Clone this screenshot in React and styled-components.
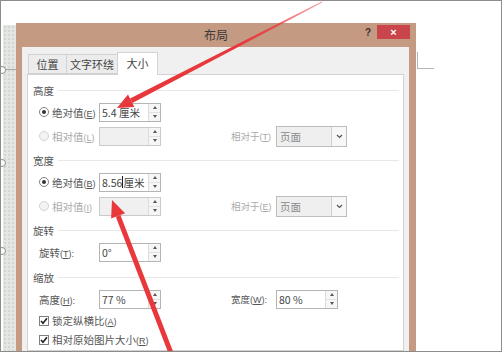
import React from "react";
import styled, { createGlobalStyle } from "styled-components";

const GlobalStyle = createGlobalStyle`
  html, body {
    margin: 0;
    padding: 0;
    background: #ffffff;
  }
  * {
    box-sizing: border-box;
  }
`;

const FONT = `"Noto Sans CJK SC", "Liberation Sans", sans-serif`;
const BROWN = "#c59a82";
const TEXT = "#555555";

const Frame = styled.div`
  position: relative;
  display: flex;
  width: 502px;
  height: 352px;
  border: 1px solid #8c8c8c;
  overflow: hidden;
  background: #fff;
  font-family: ${FONT};
`;

const DocStrip = styled.div`
  position: relative;
  width: 15px;
  flex: 0 0 15px;
  padding-top: 24px;
`;

const Picture = styled.div`
  height: 100%;
  margin-left: 2px;
  background-color: #e3e6e3;
  background-image: radial-gradient(#d2d7d3 1px, transparent 1.2px);
  background-size: 4px 4px;
`;

const MarginLine = styled.div`
  position: absolute;
  left: 0;
  right: 0;
  top: 68px;
  height: 1px;
  background: #a8a8a8;
`;

const Handle = styled.div`
  position: absolute;
  left: -3px;
  top: ${p => p.$top}px;
  width: 8px;
  height: 8px;
  border-radius: 50%;
  border: 1px solid #8c8c8c;
  background: #fff;
`;

const Dialog = styled.div`
  display: flex;
  flex-direction: column;
  width: 400px;
  flex: 0 0 400px;
  margin-top: 22px;
`;

const TitleBar = styled.div`
  display: grid;
  grid-template-columns: 1fr auto 1fr;
  align-items: start;
  height: 24px;
  background: ${BROWN};
`;

const Title = styled.div`
  grid-column: 2;
  line-height: 24px;
  font-size: 12px;
  color: #3a3a3a;
`;

const Controls = styled.div`
  grid-column: 3;
  justify-self: end;
  display: flex;
  align-items: center;
  gap: 6px;
  padding: 2px 6px 0 0;
`;

const Help = styled.span`
  font-family: "Liberation Sans", sans-serif;
  font-weight: bold;
  font-size: 10px;
  color: #3c3128;
`;

const Close = styled.div`
  display: flex;
  align-items: center;
  justify-content: center;
  width: 33px;
  height: 14px;
  background: #c9444b;
  color: #fff;
  font-family: "Liberation Sans", sans-serif;
  font-size: 11px;
  font-weight: bold;
`;

const Body = styled.div`
  flex: 1;
  display: flex;
  flex-direction: column;
  padding: 5px 5px 0 5px;
  background: #f0f0f0;
  border-left: 6px solid ${BROWN};
  border-right: 7px solid ${BROWN};
`;

const Tabs = styled.div`
  display: flex;
  align-items: flex-end;
  height: 22px;
  padding-left: 1px;
  position: relative;
  z-index: 1;
`;

const Tab = styled.div`
  width: ${p => p.$w}px;
  height: ${p => (p.$active ? 23 : 20)}px;
  margin-bottom: ${p => (p.$active ? -1 : 0)}px;
  display: flex;
  align-items: center;
  justify-content: center;
  padding-bottom: ${p => (p.$active ? 2 : 0)}px;
  font-size: 11px;
  color: #444;
  background: ${p => (p.$active ? "#ffffff" : "#ececec")};
  border: 1px solid #d2d2d2;
  border-bottom: ${p => (p.$active ? "none" : "1px solid #d2d2d2")};
  & + & {
    margin-left: -1px;
  }
`;

const Panel = styled.div`
  flex: 1;
  background: #fff;
  border: 1px solid #d2d2d2;
  padding-top: 5px;
`;

const Header = styled.div`
  display: flex;
  align-items: center;
  gap: 4px;
  height: 20px;
  margin-top: ${p => p.$mt || 0}px;
  padding: 0 4px 0 5px;
  font-size: 10.5px;
  color: ${TEXT};
  &::after {
    content: "";
    flex: 1;
    height: 1px;
    background: #e8e8e8;
  }
`;

const Row = styled.div`
  display: flex;
  align-items: center;
  height: ${p => p.$h || 24}px;
  padding-left: 11px;
`;

const LabelCell = styled.div`
  display: flex;
  align-items: center;
  gap: 3px;
  width: 60px;
  font-size: 10.5px;
  white-space: nowrap;
  color: ${p => (p.$disabled ? "#aaaaaa" : TEXT)};
`;

const Label2 = styled(LabelCell)`
  width: 45px;
  margin-left: 70px;
  font-size: 9.5px;
`;

const Radio = styled.span`
  display: inline-flex;
  align-items: center;
  justify-content: center;
  width: 10px;
  height: 10px;
  border-radius: 50%;
  border: 1px solid ${p => (p.$disabled ? "#d2d2d2" : "#808080")};
  background: ${p => (p.$disabled ? "#f3f3f3" : "#fff")};
  &::after {
    content: "";
    width: 4px;
    height: 4px;
    border-radius: 50%;
    background: ${p => (p.$checked ? "#333" : "transparent")};
  }
`;

const Check = styled.span`
  display: inline-flex;
  align-items: center;
  justify-content: center;
  width: 10px;
  height: 10px;
  border: 1px solid #808080;
  background: #fff;
`;

const CheckLabel = styled.div`
  display: flex;
  align-items: center;
  gap: 3px;
  font-size: 10.5px;
  color: ${TEXT};
`;

const Field = styled.div`
  display: flex;
  width: ${p => p.$w || 62}px;
  height: 19px;
  border: 1px solid ${p => (p.$disabled ? "#cacaca" : "#b4b4b4")};
  background: ${p => (p.$disabled ? "#f0f0f0" : "#fff")};
`;

const FieldText = styled.div`
  flex: 1;
  display: flex;
  align-items: center;
  padding-left: 2px;
  font-size: 10.5px;
  color: #444;
`;

const Caret = styled.span`
  display: inline-block;
  width: 1px;
  height: 12px;
  background: #222;
`;

const Spin = styled.div`
  display: flex;
  flex-direction: column;
  width: 12px;
  border-left: 1px solid #dcdcdc;
  background: #f6f6f6;
`;

const SpinHalf = styled.div`
  flex: 1;
  display: flex;
  align-items: center;
  justify-content: center;
  & + & {
    border-top: 1px solid #e2e2e2;
  }
  &::after {
    content: "";
    border-left: 2px solid transparent;
    border-right: 2px solid transparent;
    ${p =>
      p.$down ? "border-top: 3px solid #555;" : "border-bottom: 3px solid #555;"}
  }
`;

const Select = styled.div`
  display: flex;
  width: 71px;
  height: 21px;
  border: 1px solid #bdbdbd;
  background: #efefef;
`;

const SelectText = styled.div`
  flex: 1;
  display: flex;
  align-items: center;
  padding-left: 3px;
  font-size: 10.5px;
  color: #8a8a8a;
`;

const SelectButton = styled.div`
  width: 15px;
  display: flex;
  align-items: center;
  justify-content: center;
  border-left: 1px solid #cfcfcf;
  background: #f7f7f7;
`;

const Mn = styled.span`
  font-size: 9px;
  font-family: "Liberation Sans", sans-serif;
  & u {
    text-decoration: underline;
  }
`;

const PageSide = styled.div`
  flex: 1;
  padding: 51px 0 0 1px;
`;

const CornerMark = styled.div`
  width: 17px;
  height: 17px;
  border-left: 1px solid #b4b4b4;
  border-bottom: 1px solid #b4b4b4;
`;

const Overlay = styled.svg`
  position: absolute;
  left: -1px;
  top: -1px;
  pointer-events: none;
`;

const Mnemonic = ({ k, colon }) => (
  <Mn>
    (<u>{k}</u>){colon ? ":" : ""}
  </Mn>
);

const SpinBox = () => (
  <Spin>
    <SpinHalf />
    <SpinHalf $down />
  </Spin>
);

const NumField = ({ value, disabled, w }) => (
  <Field $disabled={disabled} $w={w}>
    <FieldText>{value}</FieldText>
    <SpinBox />
  </Field>
);

const Chevron = () => (
  <svg width="7" height="5" viewBox="0 0 7 5">
    <path d="M1 1 L3.5 3.5 L6 1" fill="none" stroke="#555" strokeWidth="1.2" />
  </svg>
);

const Tick = () => (
  <svg width="8" height="8" viewBox="0 0 8 8">
    <path d="M1 4 L3 6.3 L7 1.2" fill="none" stroke="#222" strokeWidth="1.6" />
  </svg>
);

const PageSelect = () => (
  <Select>
    <SelectText>页面</SelectText>
    <SelectButton>
      <Chevron />
    </SelectButton>
  </Select>
);

const Arrows = () => (
  <Overlay width="502" height="352" viewBox="0 0 502 352">
    <defs>
      <linearGradient id="fade" x1="117" y1="108" x2="322" y2="2" gradientUnits="userSpaceOnUse">
        <stop offset="0" stopColor="#e8383b" />
        <stop offset="0.6" stopColor="#e8383b" />
        <stop offset="1" stopColor="#e8383b" stopOpacity="0.45" />
      </linearGradient>
    </defs>
    <polygon
      points="132.4,102.9 130,98.5 321.7,1.4 322.3,2.6"
      fill="url(#fade)"
    />
    <polygon points="117,108 134.4,106.9 128,94.5" fill="#e8383b" />
    <polygon
      points="120.4,215 115.8,216.8 168.7,353.9 173.3,352.1"
      fill="#e8383b"
    />
    <polygon points="112,200 125.1,213.2 111.1,218.6" fill="#e8383b" />
  </Overlay>
);

export default function App() {
  return (
    <>
      <GlobalStyle />
      <Frame>
        <DocStrip>
          <Picture />
          <MarginLine />
          <Handle $top={65} />
          <Handle $top={158} />
          <Handle $top={246} />
        </DocStrip>

        <Dialog>
          <TitleBar>
            <Title>布局</Title>
            <Controls>
              <Help>?</Help>
              <Close>×</Close>
            </Controls>
          </TitleBar>
          <Body>
            <Tabs>
              <Tab $w={39}>位置</Tab>
              <Tab $w={52}>文字环绕</Tab>
              <Tab $w={41} $active>
                大小
              </Tab>
            </Tabs>
            <Panel>
              <Header>高度</Header>
              <Row>
                <LabelCell>
                  <Radio $checked />
                  <span>
                    绝对值<Mnemonic k="E" />
                  </span>
                </LabelCell>
                <NumField value="5.4 厘米" />
              </Row>
              <Row>
                <LabelCell $disabled>
                  <Radio $disabled />
                  <span>
                    相对值<Mnemonic k="L" />
                  </span>
                </LabelCell>
                <NumField value="" disabled />
                <Label2 $disabled>
                  <span>
                    相对于<Mnemonic k="T" />
                  </span>
                </Label2>
                <PageSelect />
              </Row>

              <Header $mt={2}>宽度</Header>
              <Row>
                <LabelCell>
                  <Radio $checked />
                  <span>
                    绝对值<Mnemonic k="B" />
                  </span>
                </LabelCell>
                <NumField
                  value={
                    <>
                      8.56
                      <Caret />
                      厘米
                    </>
                  }
                />
              </Row>
              <Row>
                <LabelCell $disabled>
                  <Radio $disabled />
                  <span>
                    相对值<Mnemonic k="I" />
                  </span>
                </LabelCell>
                <NumField value="" disabled />
                <Label2 $disabled>
                  <span>
                    相对于<Mnemonic k="E" />
                  </span>
                </Label2>
                <PageSelect />
              </Row>

              <Header $mt={2}>旋转</Header>
              <Row>
                <LabelCell>
                  <span>
                    旋转<Mnemonic k="T" colon />
                  </span>
                </LabelCell>
                <NumField value="0°" />
              </Row>

              <Header $mt={3}>缩放</Header>
              <Row>
                <LabelCell>
                  <span>
                    高度<Mnemonic k="H" colon />
                  </span>
                </LabelCell>
                <NumField value="77 %" />
                <Label2>
                  <span>
                    宽度<Mnemonic k="W" colon />
                  </span>
                </Label2>
                <NumField value="80 %" />
              </Row>
              <Row $h={19}>
                <CheckLabel>
                  <Check>
                    <Tick />
                  </Check>
                  <span>
                    锁定纵横比<Mnemonic k="A" />
                  </span>
                </CheckLabel>
              </Row>
              <Row $h={19}>
                <CheckLabel>
                  <Check>
                    <Tick />
                  </Check>
                  <span>
                    相对原始图片大小<Mnemonic k="R" />
                  </span>
                </CheckLabel>
              </Row>
            </Panel>
          </Body>
        </Dialog>

        <PageSide>
          <CornerMark />
        </PageSide>

        <Arrows />
      </Frame>
    </>
  );
}
